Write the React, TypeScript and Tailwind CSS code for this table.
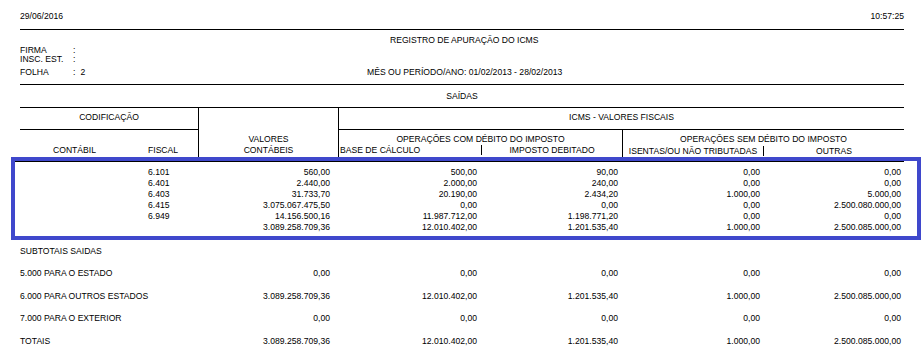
const rows = [
  ["6.101", "560,00", "500,00", "90,00", "0,00", "0,00"],
  ["6.401", "2.440,00", "2.000,00", "240,00", "0,00", "0,00"],
  ["6.403", "31.733,70", "20.190,00", "2.434,20", "1.000,00", "5.000,00"],
  ["6.415", "3.075.067.475,50", "0,00", "0,00", "0,00", "2.500.080.000,00"],
  ["6.949", "14.156.500,16", "11.987.712,00", "1.198.771,20", "0,00", "0,00"],
  ["", "3.089.258.709,36", "12.010.402,00", "1.201.535,40", "1.000,00", "2.500.085.000,00"],
];

const subtotals = [
  ["5.000 PARA O ESTADO", "0,00", "0,00", "0,00", "0,00", "0,00"],
  ["6.000 PARA OUTROS ESTADOS", "3.089.258.709,36", "12.010.402,00", "1.201.535,40", "1.000,00", "2.500.085.000,00"],
  ["7.000 PARA O EXTERIOR", "0,00", "0,00", "0,00", "0,00", "0,00"],
  ["TOTAIS", "3.089.258.709,36", "12.010.402,00", "1.201.535,40", "1.000,00", "2.500.085.000,00"],
];

const cols = "grid grid-cols-[128px_60px_122px_147px_141px_142px_141px]";

export default function App() {
  return (
    <div className="w-[924px] h-[351px] overflow-hidden bg-white text-black font-['Liberation_Sans',Arial,sans-serif] text-[8.6px] leading-[11px]">
      <div className="px-[20px]">
        {/* Date / time */}
        <div className="h-[30px] border-b border-black pt-[11px] flex justify-between">
          <span>29/06/2016</span>
          <span>10:57:25</span>
        </div>

        {/* Title and company info */}
        <div className="h-[55px] border-b border-black pt-[5px]">
          <div className="pl-[370px]">REGISTRO DE APURAÇÃO DO ICMS</div>
          <div className="flex leading-[9px]">
            <span className="w-[53px]">FIRMA</span>
            <span>:</span>
          </div>
          <div className="flex leading-[9px]">
            <span className="w-[53px]">INSC. EST.</span>
            <span>:</span>
          </div>
          <div className="flex mt-[3px]">
            <div className="w-[347px] flex">
              <span className="w-[53px]">FOLHA</span>
              <span>:</span>
              <span className="ml-[5px]">2</span>
            </div>
            <span>MÊS OU PERÍODO/ANO: 01/02/2013 - 28/02/2013</span>
          </div>
        </div>

        {/* Section */}
        <div className="h-[23px] border-b border-black pt-[6px] text-center">SAÍDAS</div>

        {/* Column headers */}
        <div className="h-[49px] grid grid-cols-[178px_141px_283px_282px] grid-rows-[22px_27px]">
          <div className="border-b border-black pt-[4px] text-center">CODIFICAÇÃO</div>
          <div className="row-span-2 border-l border-r border-black pt-[26px] text-center">
            <div>VALORES</div>
            <div>CONTÁBEIS</div>
          </div>
          <div className="col-span-2 border-b border-black pt-[4px] text-center">ICMS - VALORES FISCAIS</div>
          <div className="pt-[15px] flex">
            <span className="w-[128px] pl-[33px]">CONTÁBIL</span>
            <span>FISCAL</span>
          </div>
          <div className="pt-[4px]">
            <div className="text-center">OPERAÇÕES COM DÉBITO DO IMPOSTO</div>
            <div className="flex leading-[10px]">
              <span className="w-[143px] pl-[1px] border-r border-black">BASE DE CÁLCULO</span>
              <span className="flex-1 text-center">IMPOSTO DEBITADO</span>
            </div>
          </div>
          <div className="border-l border-black pt-[4px]">
            <div className="text-center">OPERAÇÕES SEM DÉBITO DO IMPOSTO</div>
            <div className="flex leading-[10px] mt-[1px]">
              <span className="w-[141px] border-r border-black text-center">ISENTAS/OU NÃO TRIBUTADAS</span>
              <span className="flex-1 text-center">OUTRAS</span>
            </div>
          </div>
        </div>

        {/* Highlighted detail rows */}
        <div className="-ml-[9px] -mr-[17px] border-4 border-[#3f48cc]">
          <div className="mr-[13px] border-t border-black pt-[5px] pb-[3px] pl-[5px]">
            {rows.map((r, i) => (
              <div key={i} className={cols}>
                <span />
                <span>{r[0]}</span>
                {r.slice(1).map((v, j) => (
                  <span key={j} className="text-right">{v}</span>
                ))}
              </div>
            ))}
          </div>
        </div>

        {/* Subtotals */}
        <div className="mt-[6px] flex flex-col gap-[11.4px]">
          <div>SUBTOTAIS SAIDAS</div>
          {subtotals.map((r, i) => (
            <div key={i} className={cols}>
              <span className="col-span-2">{r[0]}</span>
              {r.slice(1).map((v, j) => (
                <span key={j} className="text-right">{v}</span>
              ))}
            </div>
          ))}
        </div>
      </div>
    </div>
  );
}
